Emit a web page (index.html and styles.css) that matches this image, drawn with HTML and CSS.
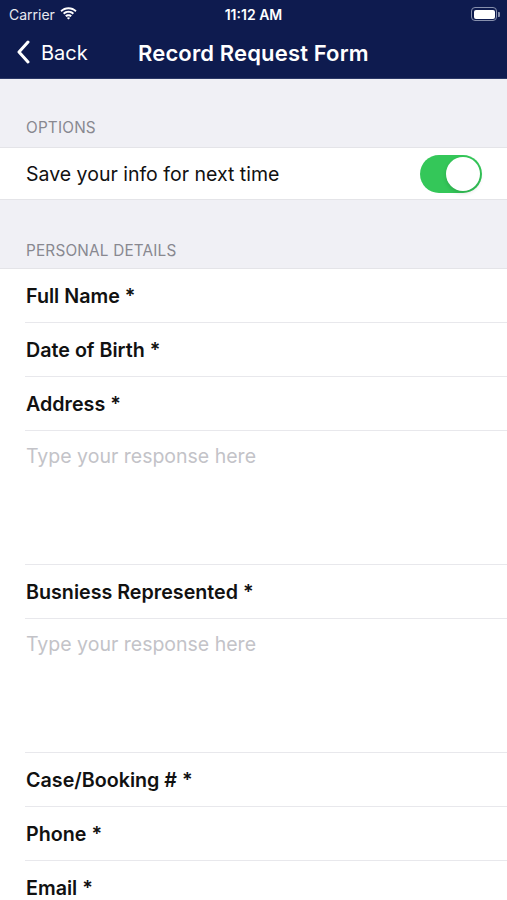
FILE: index.html
```html
<!DOCTYPE html>
<html>
<head>
<meta charset="utf-8">
<link rel="stylesheet" href="styles.css">
</head>
<body>
<div class="app">
  <header class="nav">
    <div class="status">
      <div class="carrier">Carrier
        <svg class="wifi" width="17" height="13" viewBox="0 0 17 13"><path d="M8.5 2.2c2.6 0 5 1 6.8 2.7l1.3-1.4C14.4 1.4 11.6.2 8.5.2S2.6 1.4.4 3.5l1.3 1.4C3.5 3.2 5.9 2.2 8.5 2.2z" fill="#fff"/><path d="M8.5 5.8c1.6 0 3.1.6 4.2 1.6l1.3-1.4C12.5 4.6 10.6 3.8 8.5 3.8S4.5 4.6 3 6l1.3 1.4c1.1-1 2.6-1.6 4.2-1.6z" fill="#fff"/><path d="M8.5 9.2c.8 0 1.5.3 2 .8l1.4-1.4c-.9-.9-2.1-1.4-3.4-1.4s-2.5.5-3.4 1.4L6.5 10c.5-.5 1.2-.8 2-.8zM8.5 12.6l1.6-1.6c-.4-.4-1-.7-1.6-.7s-1.2.3-1.6.7z" fill="#fff"/></svg>
      </div>
      <div class="time">11:12 AM</div>
      <div class="battery"><span class="batt-body"><span class="batt-fill"></span></span><span class="batt-nub"></span></div>
    </div>
    <div class="navrow">
      <div class="back">
        <svg width="14" height="24" viewBox="0 0 14 24"><path d="M12 2L3 12l9 10" fill="none" stroke="#fff" stroke-width="3" stroke-linecap="round" stroke-linejoin="round"/></svg>
        <span>Back</span>
      </div>
      <div class="title">Record Request Form</div>
    </div>
  </header>

  <div class="section-head">OPTIONS</div>
  <div class="group">
    <div class="row toggle-row">
      <span class="plain">Save your info for next time</span>
      <span class="switch"><span class="knob"></span></span>
    </div>
  </div>

  <div class="section-head second">PERSONAL DETAILS</div>
  <div class="group">
    <div class="row"><span class="label">Full Name *</span></div>
    <div class="row"><span class="label">Date of Birth *</span></div>
    <div class="row"><span class="label">Address *</span></div>
    <div class="area">Type your response here</div>
    <div class="row"><span class="label">Busniess Represented *</span></div>
    <div class="area">Type your response here</div>
    <div class="row"><span class="label">Case/Booking # *</span></div>
    <div class="row"><span class="label">Phone *</span></div>
    <div class="row last"><span class="label">Email *</span></div>
  </div>
</div>
</body>
</html>
```

FILE: styles.css
```css
* { box-sizing: border-box; }
html, body { margin: 0; padding: 0; }
body {
  background: #f0f0f5;
  font-family: "Inter", "Liberation Sans", Arial, sans-serif;
  color: #111;
  overflow: hidden;
}
.app { width: 507px; height: 900px; overflow: hidden; }
.nav {
  background: #0e1b4f;
  color: #fff;
  height: 79px;
  border-bottom: 1px solid #2b3866;
}
.status {
  height: 28px;
  display: flex;
  align-items: center;
  justify-content: space-between;
  padding: 0 7px 0 9px;
  font-size: 14px;
  position: relative;
}
.carrier { display: flex; align-items: center; gap: 5px; color: #e8e9ef; font-weight: 400; }
.wifi { margin-top: -2px; }
.time {
  position: absolute; left: 0; right: 0; text-align: center;
  font-weight: 600; font-size: 14px; color: #fff;
}
.battery { display: flex; align-items: center; }
.batt-body {
  width: 26px; height: 14px; border: 1.5px solid #8790ad; border-radius: 4px;
  padding: 1.5px; display: block;
}
.batt-fill { display: block; width: 100%; height: 100%; background: #fff; border-radius: 2px; }
.batt-nub { width: 2px; height: 5px; background: #8790ad; border-radius: 0 1px 1px 0; margin-left: 1px; }
.navrow {
  height: 50px;
  display: flex;
  align-items: center;
  padding-left: 16px;
}
.back { display: flex; align-items: center; gap: 11px; font-size: 20px; width: 122px; }
.back svg { margin-top: -2px; }
.title { font-size: 22px; font-weight: 600; letter-spacing: 0.15px; }
.section-head {
  height: 68px;
  display: flex;
  align-items: flex-end;
  padding: 0 0 10px 26px;
  color: #888890;
  font-size: 15.3px;
  letter-spacing: 0.2px;
}
.section-head.second { padding-bottom: 8px; }
.group {
  background: #fff;
  border-top: 1px solid #e4e4e8;
  border-bottom: 1px solid #e4e4e8;
}
.row {
  height: 54px;
  margin-left: 25px;
  padding-left: 1px;
  display: flex;
  align-items: center;
  border-bottom: 1px solid #e8e8ec;
}
.row.last { border-bottom: none; }
.toggle-row { border-bottom: none; justify-content: space-between; padding-right: 25px; height: 51px; }
.plain { font-size: 19.5px; color: #111; }
.label { font-size: 19.7px; font-weight: 600; color: #111; }
.switch {
  width: 62px; height: 38px; border-radius: 19px; background: #34c759;
  position: relative; display: block;
}
.knob {
  position: absolute; right: 2px; top: 2px; width: 34px; height: 34px;
  border-radius: 50%; background: #fff; box-shadow: 0 2px 4px rgba(0,0,0,0.15);
}
.area {
  height: 134px;
  margin-left: 25px;
  padding: 13px 0 0 1px;
  color: #c3c3c8;
  font-size: 19.5px;
  border-bottom: 1px solid #e8e8ec;
}
```
